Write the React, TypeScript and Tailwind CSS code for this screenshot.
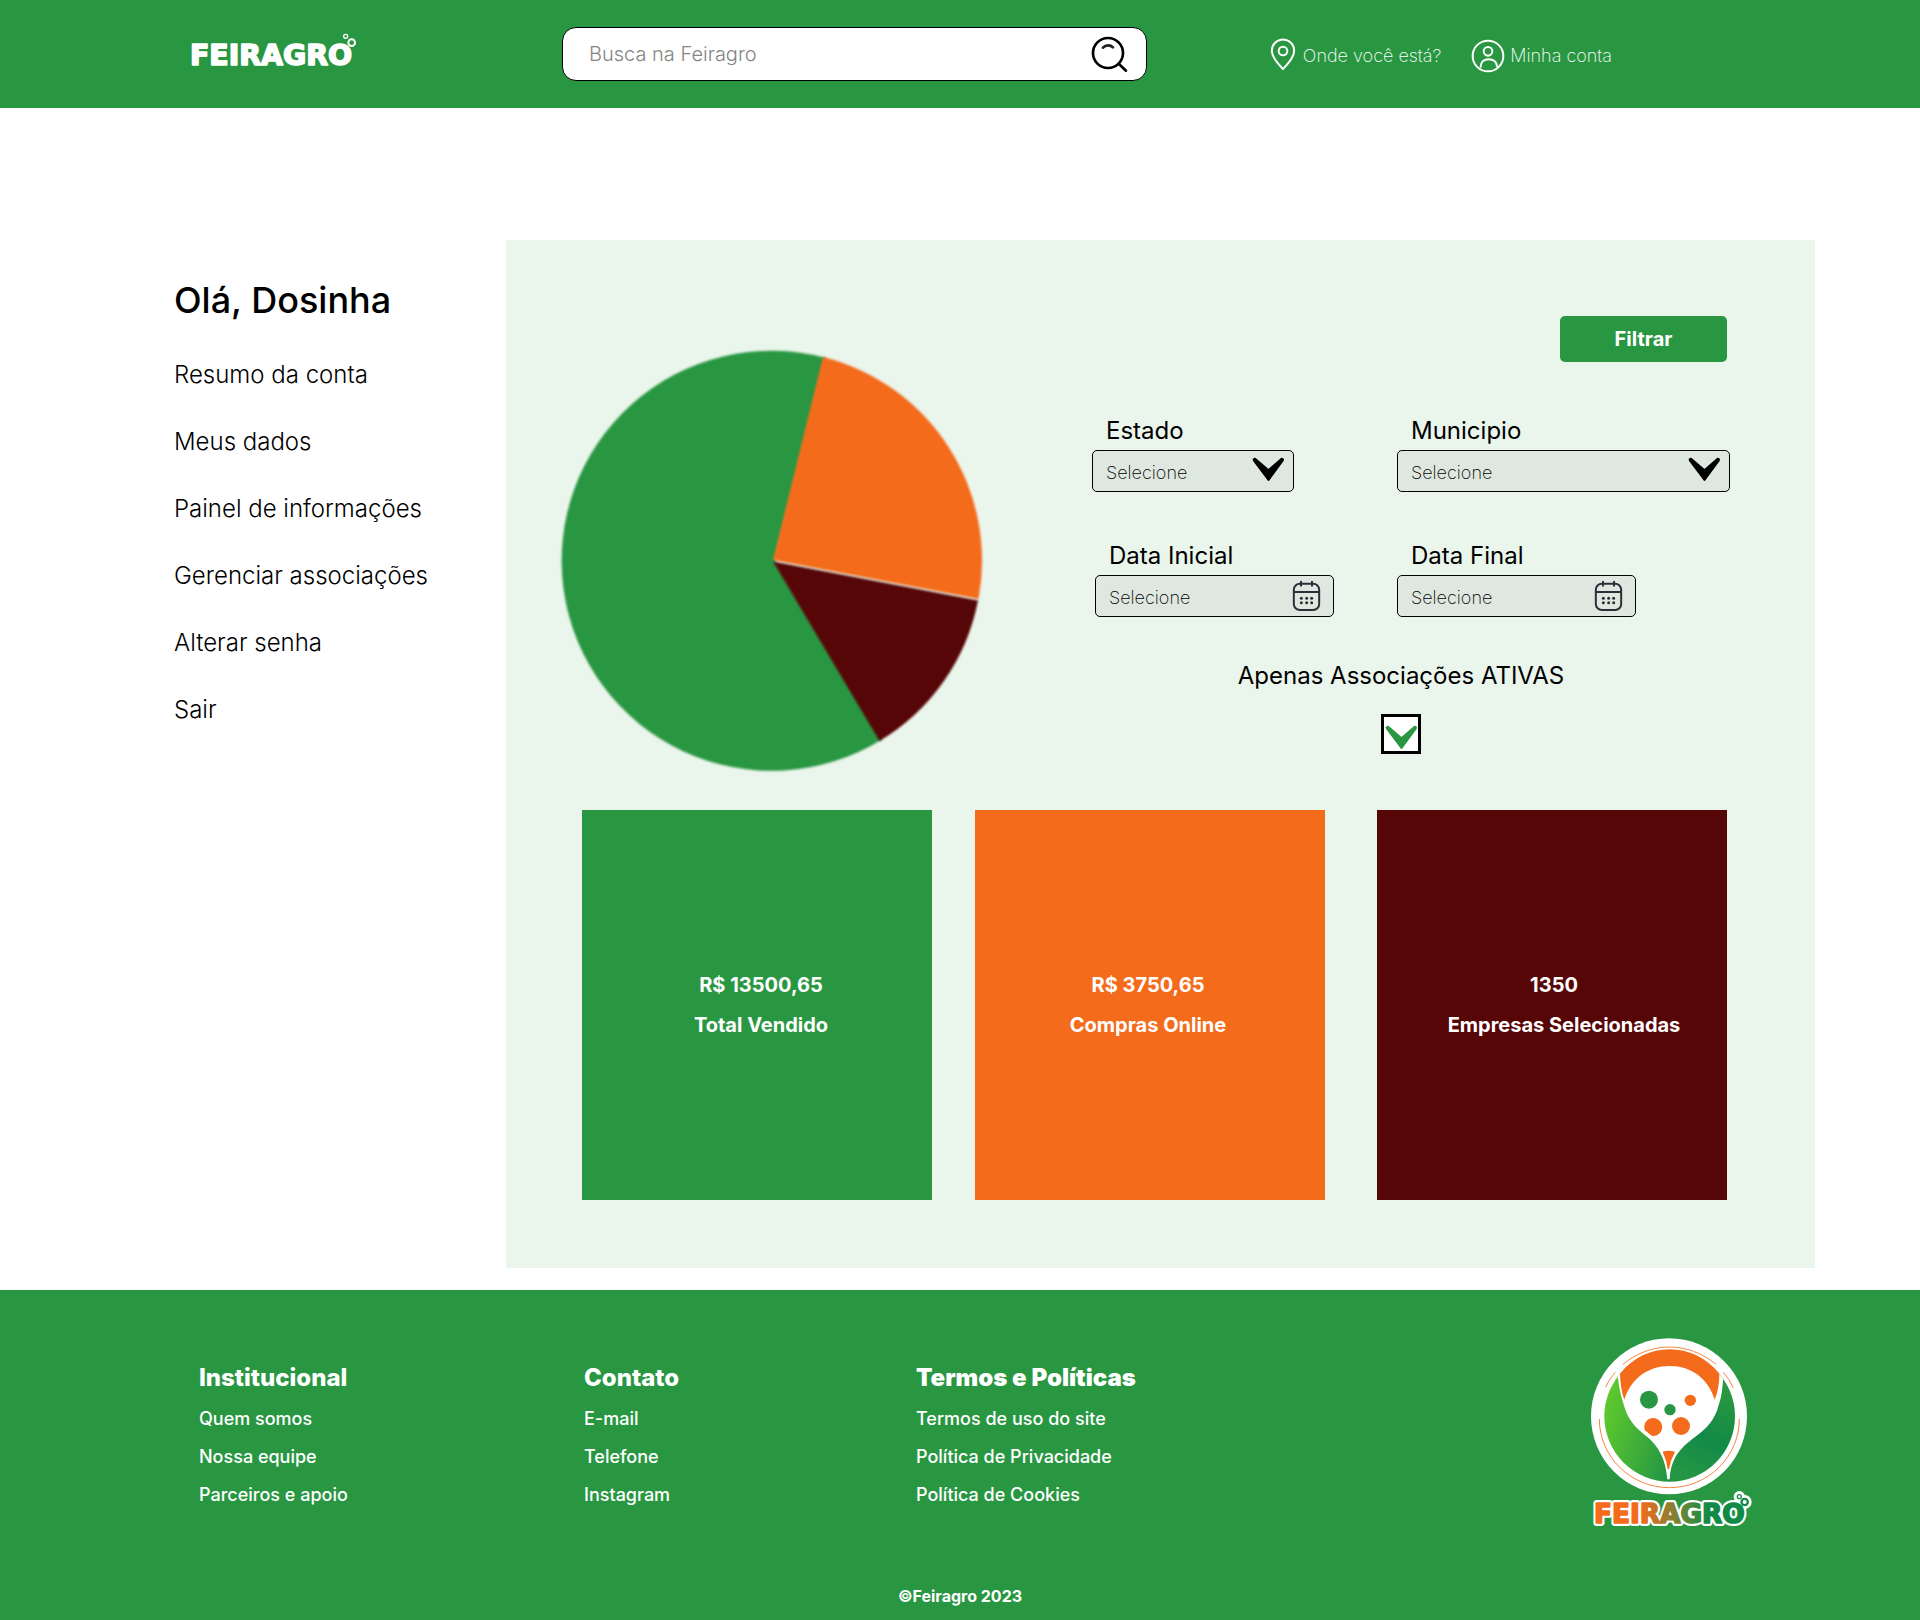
import React from "react";

function HeaderLogo() {
  return (
    <svg viewBox="60 36 504 108" className="h-9 w-[168px] shrink-0 overflow-visible" role="img" aria-label="Feiragro">
      <text
        x="60"
        y="135"
        fontFamily="'DejaVu Sans', sans-serif"
        fontWeight="700"
        fontSize="85"
        fill="#fff"
        stroke="#fff"
        strokeWidth="5"
        strokeLinejoin="round"
      >
        FEIRAGRO
      </text>
      <g fill="#299742" stroke="#fff">
        <circle cx="527" cy="49" r="6" strokeWidth="4" />
        <circle cx="545" cy="68" r="10" strokeWidth="6" />
      </g>
    </svg>
  );
}

function SearchIcon() {
  return (
    <svg viewBox="30 27 111 111" className="h-[37px] w-[37px]" fill="none" stroke="#000" strokeWidth="8" strokeLinecap="round">
      <circle cx="81" cy="78" r="45" />
      <path d="M113 110L135 131" />
      <path d="M66 62C74 53 88 53 96 61" stroke="#222" />
    </svg>
  );
}

function PinIcon() {
  return (
    <svg viewBox="60 54 78 99" className="mb-1 h-[33px] w-[26px]" fill="none" stroke="#fff" strokeWidth="6" strokeLinejoin="round">
      <path d="M99 147C84 131 65.500 113 65.500 92a33.500 33.500 0 0 1 67 0C132.500 113 114 131 99 147Z" />
      <circle cx="99" cy="93" r="13" />
    </svg>
  );
}

function AccountIcon() {
  return (
    <svg viewBox="663 57 102 102" className="h-[34px] w-[34px]" fill="none" stroke="#fff" strokeWidth="6" strokeLinecap="round">
      <circle cx="714" cy="108" r="46" />
      <circle cx="714" cy="94" r="13" />
      <path d="M692 140C692 126 702 117.500 716 117.500S740 126 741 139" />
    </svg>
  );
}

function CheckMark({ className }: { className: string }) {
  return (
    <svg viewBox="37 51 98 74" className={className} fill="currentColor" stroke="currentColor" strokeWidth="6" strokeLinejoin="round" aria-hidden="true">
      <path d="M42 58L46 56L86 90L125 56L129 58L128 62L86 119L43 62Z" />
    </svg>
  );
}

function CalendarIcon() {
  return (
    <svg viewBox="156 420 87 96" className="h-8 w-[29px]" fill="none" stroke="#2a3038" strokeWidth="6" strokeLinecap="round">
      <rect x="161.500" y="431" width="76" height="79" rx="18" />
      <path d="M162 456H237M183 425V437M216 425V437" />
      <g fill="#2a3038" stroke="none">
        <circle cx="184" cy="475" r="4.500" />
        <circle cx="200" cy="475" r="4.500" />
        <circle cx="215" cy="475" r="4.500" />
        <circle cx="184" cy="488" r="4.500" />
        <circle cx="200" cy="488" r="4.500" />
        <circle cx="215" cy="488" r="4.500" />
      </g>
    </svg>
  );
}

function PieChart() {
  return (
    <svg viewBox="558 347 428 428" className="h-[428px] w-[428px] shrink-0" role="img" aria-label="Distribuição de vendas">
      <defs>
        <filter id="soft" x="-5%" y="-5%" width="110%" height="110%" colorInterpolationFilters="sRGB">
          <feGaussianBlur stdDeviation="1.300" />
        </filter>
      </defs>
      <path filter="url(#soft)" fill="#299742" d="M775 561L826 358A210 210 0 1 0 882 739.500Z" />
      <path filter="url(#soft)" fill="#f46b1c" d="M773 560L823 357A210 210 0 0 1 978.500 599Z" />
      <path filter="url(#soft)" fill="#560607" d="M773 561.500L978 600.500A210 210 0 0 1 879.500 741Z" />
    </svg>
  );
}

function FooterEmblem() {
  return (
    <svg viewBox="60 50 492 576" className="h-48 w-[164px] shrink-0" role="img" aria-label="Feiragro">
      <defs>
        <linearGradient id="leaf" x1="0" y1="0.300" x2="1" y2="0.850">
          <stop offset="0" stopColor="#65cf2a" />
          <stop offset="1" stopColor="#259744" />
        </linearGradient>
        <linearGradient id="leafRight" x1="0.700" y1="0" x2="0.450" y2="1">
          <stop offset="0" stopColor="#36a03c" />
          <stop offset="0.650" stopColor="#128a47" />
          <stop offset="1" stopColor="#259744" />
        </linearGradient>
        <linearGradient id="brand" gradientUnits="userSpaceOnUse" x1="78" y1="0" x2="530" y2="0">
          <stop offset="0.300" stopColor="#f46b1c" />
          <stop offset="0.620" stopColor="#4f8a3c" />
          <stop offset="0.750" stopColor="#118a46" />
        </linearGradient>
        <clipPath id="disc">
          <circle cx="299" cy="288" r="196" />
        </clipPath>
      </defs>
      <circle cx="297" cy="288" r="234" fill="#fff" />
      <g clipPath="url(#disc)">
        <path fill="url(#leaf)" d="M90 90H298V490H90Z" />
        <path fill="url(#leafRight)" d="M297 90H500V490H297Z" />
        <path
          fill="#fff"
          d="M135 160L160 80H440L462 160C457 185 459 218 446 254C435 300 408 326 375 350C330 384 303 412 299 477H292C287 412 262 375 232 350C205 328 180 308 166 268C154 232 147 205 143 165Z"
        />
      </g>
      <path fill="#f46b1c" d="M150 160C190 111 242 87 299 87S408 111 448 160C448 188 444 214 434 238C416 176 365 137 299 137S182 176 163 238C154 214 151 188 150 160Z" />
      <circle cx="237" cy="238" r="27" fill="#299742" />
      <circle cx="300" cy="268" r="17" fill="#299742" />
      <circle cx="361" cy="240" r="17" fill="#f46b1c" />
      <circle cx="333" cy="317" r="27" fill="#f46b1c" />
      <path fill="#f46b1c" d="M224 329A27 27 0 1 1 247 347C240 344 231 334 224 329Z" />
      <path fill="#f46b1c" d="M278 394Q297 388 315 394Q301 420 297 447H293Q290 420 278 394Z" />
      <g fill="none" stroke="#f46b1c" strokeWidth="2.500" strokeLinecap="round">
        <path d="M160 131C242 63 354 63 437 131" />
        <path d="M107 200Q117 177 135 157" />
        <path d="M461 157Q479 177 489 201" />
        <path d="M88 297A210 205 0 0 0 508 297" />
      </g>
      <g stroke="#fff" strokeWidth="18" strokeLinejoin="round" fill="#fff">
        <text x="72" y="609" fontFamily="'DejaVu Sans', sans-serif" fontWeight="700" fontSize="79">
          FEIRAGRO
        </text>
        <circle cx="508" cy="529" r="8" />
        <circle cx="524" cy="545" r="12" />
      </g>
      <text
        x="72"
        y="609"
        fontFamily="'DejaVu Sans', sans-serif"
        fontWeight="700"
        fontSize="79"
        fill="url(#brand)"
        stroke="url(#brand)"
        strokeWidth="5"
        strokeLinejoin="round"
      >
        FEIRAGRO
      </text>
      <g fill="#fff" stroke="#118a46">
        <circle cx="508" cy="529" r="6" strokeWidth="4" />
        <circle cx="524" cy="545" r="9.500" strokeWidth="7" />
      </g>
    </svg>
  );
}

const fieldBox =
  "h-[42px] w-full rounded-[5px] border border-black bg-[#dfe8e0] pt-[3px] pl-[13px] text-lg font-extralight text-black outline-none";

function SelectField({ id, label, className }: { id: string; label: string; className: string }) {
  return (
    <div className={className}>
      <label htmlFor={id} className="mb-1 block pl-[14px] text-2xl leading-[30px]">
        {label}
      </label>
      <div className="relative">
        <select id={id} className={`appearance-none ${fieldBox}`}>
          <option>Selecione</option>
        </select>
        <CheckMark className="pointer-events-none absolute top-[7px] right-[9px] h-[25px] w-[33px] text-black" />
      </div>
    </div>
  );
}

function DateField({ id, label, className }: { id: string; label: string; className: string }) {
  return (
    <div className={className}>
      <label htmlFor={id} className="mb-1 block pl-[14px] text-2xl leading-[30px]">
        {label}
      </label>
      <div className="relative">
        <input id={id} type="text" placeholder="Selecione" className={`placeholder:text-black placeholder:opacity-100 ${fieldBox}`} />
        <button type="button" aria-label={`Abrir calendário: ${label}`} className="absolute top-[5px] right-[13px]">
          <CalendarIcon />
        </button>
      </div>
    </div>
  );
}

const menu = ["Resumo da conta", "Meus dados", "Painel de informações", "Gerenciar associações", "Alterar senha", "Sair"];

const cards = [
  { value: "R$ 13500,65", label: "Total Vendido", box: "mr-[43px] bg-[#299742]", inner: "pl-2", text: "" },
  { value: "R$ 3750,65", label: "Compras Online", box: "mr-[52px] bg-[#f46b1c]", inner: "pr-1", text: "" },
  { value: "1350", label: "Empresas Selecionadas", box: "bg-[#560607]", inner: "pl-1", text: "pl-5" },
];

const footerColumns = [
  { title: "Institucional", links: ["Quem somos", "Nossa equipe", "Parceiros e apoio"], width: "w-[385px]", weight: "font-extrabold" },
  { title: "Contato", links: ["E-mail", "Telefone", "Instagram"], width: "w-[332px]", weight: "font-extrabold" },
  { title: "Termos e Políticas", links: ["Termos de uso do site", "Política de Privacidade", "Política de Cookies"], width: "", weight: "font-black" },
];

export default function App() {
  return (
    <div className="bg-white font-['Inter',sans-serif] text-black">
      <header className="flex h-[108px] items-center bg-[#299742] pr-[308px] pl-[190px]">
        <a href="#" className="-mt-2">
          <HeaderLogo />
        </a>
        <form className="mr-[123px] ml-[204px] flex h-[54px] flex-1 items-center rounded-[14px] border border-black bg-white pr-[18px] pl-[26px]">
          <input
            type="search"
            aria-label="Busca na Feiragro"
            placeholder="Busca na Feiragro"
            className="min-w-0 flex-1 bg-transparent text-xl font-light outline-none placeholder:text-[#858585]"
          />
          <button type="button" aria-label="Buscar">
            <SearchIcon />
          </button>
        </form>
        <nav className="flex items-center gap-[30px] pt-1 text-lg font-extralight whitespace-nowrap text-white">
          <a href="#" className="flex items-center gap-[7px]">
            <PinIcon />
            <span>Onde você está?</span>
          </a>
          <a href="#" className="flex items-center gap-[5px]">
            <AccountIcon />
            <span>Minha conta</span>
          </a>
        </nav>
      </header>

      <main className="flex pt-[132px] pr-[105px] pb-[22px] pl-[174px]">
        <aside className="w-[332px] shrink-0 pt-[38px]">
          <h1 className="text-4xl leading-[44px] font-medium">Olá, Dosinha</h1>
          <ul className="mt-[38px] flex flex-col gap-[37px] text-2xl leading-[30px] font-light">
            {menu.map((item) => (
              <li key={item}>
                <a href="#">{item}</a>
              </li>
            ))}
          </ul>
        </aside>

        <section className="flex-1 bg-[#eaf5eb] pt-[76px] pr-[85px] pb-[68px] pl-[52px]">
          <div className="flex justify-between">
            <div className="pt-[31px]">
              <PieChart />
            </div>
            <div className="w-[638px]">
              <div className="flex justify-end pr-[3px]">
                <button type="button" className="h-[46px] w-[167px] rounded-[5px] bg-[#299742] text-xl font-bold text-white">
                  Filtrar
                </button>
              </div>
              <form>
                <div className="mt-[54px] flex justify-between">
                  <SelectField id="estado" label="Estado" className="w-[202px]" />
                  <SelectField id="municipio" label="Municipio" className="w-[333px]" />
                </div>
                <div className="mt-[49px] flex gap-[63px] pl-[3px]">
                  <DateField id="data-inicial" label="Data Inicial" className="w-[239px]" />
                  <DateField id="data-final" label="Data Final" className="w-[239px]" />
                </div>
                <div className="mt-11 flex flex-col items-center pr-5">
                  <label htmlFor="ativas" className="text-2xl leading-[30px]">
                    Apenas Associações ATIVAS
                  </label>
                  <div className="relative mt-[23px] h-10 w-10">
                    <input id="ativas" type="checkbox" defaultChecked className="peer block h-10 w-10 appearance-none border-3 border-black bg-white" />
                    <CheckMark className="pointer-events-none absolute top-[11px] left-1 hidden h-[25px] w-[33px] text-[#299742] peer-checked:block" />
                  </div>
                </div>
              </form>
            </div>
          </div>

          <div className="mt-[35px] flex pr-[3px] pl-6 text-xl leading-6 font-bold text-white">
            {cards.map((card) => (
              <article key={card.label} className={`h-[390px] flex-1 ${card.box}`}>
                <div className={`flex h-full flex-col items-center justify-center gap-4 ${card.inner}`}>
                  <p>{card.value}</p>
                  <p className={card.text}>{card.label}</p>
                </div>
              </article>
            ))}
          </div>
        </section>
      </main>

      <footer className="bg-[#299742] pt-[47px] pb-3 text-white">
        <div className="flex items-start pr-[166px] pl-[199px]">
          {footerColumns.map((column) => (
            <div key={column.title} className={`pt-[26px] ${column.width}`}>
              <h2 className={`text-2xl leading-[30px] ${column.weight}`}>{column.title}</h2>
              <ul className="mt-[14px] flex flex-col gap-[14px] text-lg leading-6 font-medium">
                {column.links.map((link) => (
                  <li key={link}>
                    <a href="#">{link}</a>
                  </li>
                ))}
              </ul>
            </div>
          ))}
          <a href="#" className="ml-auto">
            <FooterEmblem />
          </a>
        </div>
        <p className="mt-[55px] text-center text-base leading-6 font-bold">©Feiragro 2023</p>
      </footer>
    </div>
  );
}
